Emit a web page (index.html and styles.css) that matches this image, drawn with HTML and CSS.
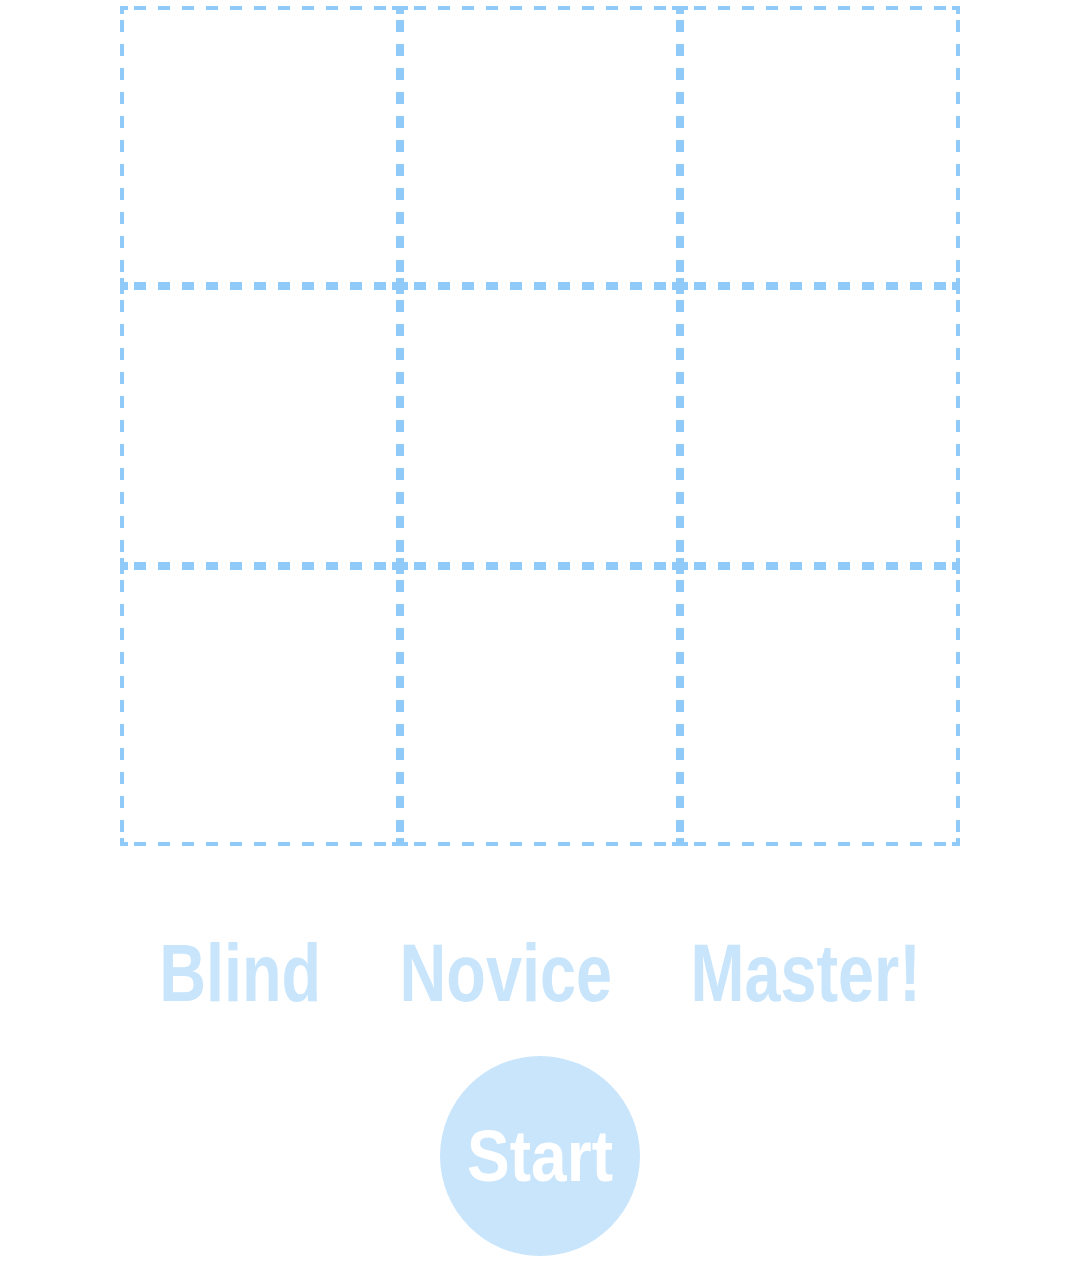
FILE: index.html
```html
<!DOCTYPE html>
<html>
<head>
<meta charset="utf-8">
<link rel="stylesheet" href="styles.css">
</head>
<body>
<div class="page">
  <div class="board">
    <div class="cell"></div><div class="cell"></div><div class="cell"></div>
    <div class="cell"></div><div class="cell"></div><div class="cell"></div>
    <div class="cell"></div><div class="cell"></div><div class="cell"></div>
  </div>
  <div class="levels">
    <span class="level">Blind</span>
    <span class="level">Novice</span>
    <span class="level">Master!</span>
  </div>
  <div class="start-row">
    <button class="start"><span class="start-label">Start</span></button>
  </div>
</div>
</body>
</html>
```
FILE: styles.css
```css
html, body {
  margin: 0;
  padding: 0;
  background: #ffffff;
}
.page {
  width: 1080px;
  padding-top: 6px;
  font-family: "Liberation Sans", Arial, sans-serif;
}
.board {
  width: 840px;
  margin: 0 auto;
  display: grid;
  grid-template-columns: repeat(3, 280px);
  grid-template-rows: repeat(3, 280px);
}
.cell {
  --c: #90caf9;
  background:
    linear-gradient(var(--c), var(--c)) left 0 top 0 / 8px 4px no-repeat,
    linear-gradient(var(--c), var(--c)) left 0 top 0 / 4px 8px no-repeat,
    linear-gradient(var(--c), var(--c)) right 0 top 0 / 8px 4px no-repeat,
    linear-gradient(var(--c), var(--c)) right 0 top 0 / 4px 8px no-repeat,
    linear-gradient(var(--c), var(--c)) left 0 bottom 0 / 8px 4px no-repeat,
    linear-gradient(var(--c), var(--c)) left 0 bottom 0 / 4px 8px no-repeat,
    linear-gradient(var(--c), var(--c)) right 0 bottom 0 / 8px 4px no-repeat,
    linear-gradient(var(--c), var(--c)) right 0 bottom 0 / 4px 8px no-repeat,
    repeating-linear-gradient(90deg, var(--c) 0 12px, transparent 12px 24px) left 14px top 0 / 252px 4px no-repeat,
    repeating-linear-gradient(90deg, var(--c) 0 12px, transparent 12px 24px) left 14px bottom 0 / 252px 4px no-repeat,
    repeating-linear-gradient(180deg, var(--c) 0 12px, transparent 12px 24px) left 0 top 14px / 4px 252px no-repeat,
    repeating-linear-gradient(180deg, var(--c) 0 12px, transparent 12px 24px) right 0 top 14px / 4px 252px no-repeat;
}
.levels {
  display: flex;
  justify-content: center;
  gap: 98px;
  margin-top: 80px;
  transform: scaleX(0.8);
  transform-origin: 540px 50%;
}
.level {
  font-size: 81px;
  font-weight: bold;
  color: #c8e5fc;
  line-height: 94px;
}
.start-row {
  display: flex;
  justify-content: center;
  margin-top: 36px;
}
.start {
  width: 200px;
  height: 200px;
  border: none;
  border-radius: 50%;
  background: #c8e5fc;
  color: #ffffff;
  font-family: "Liberation Sans", Arial, sans-serif;
  font-weight: bold;
  font-size: 72px;
  padding: 0;
  display: flex;
  align-items: center;
  justify-content: center;
}
.start-label {
  display: inline-block;
  transform: scaleX(0.89);
}
```
